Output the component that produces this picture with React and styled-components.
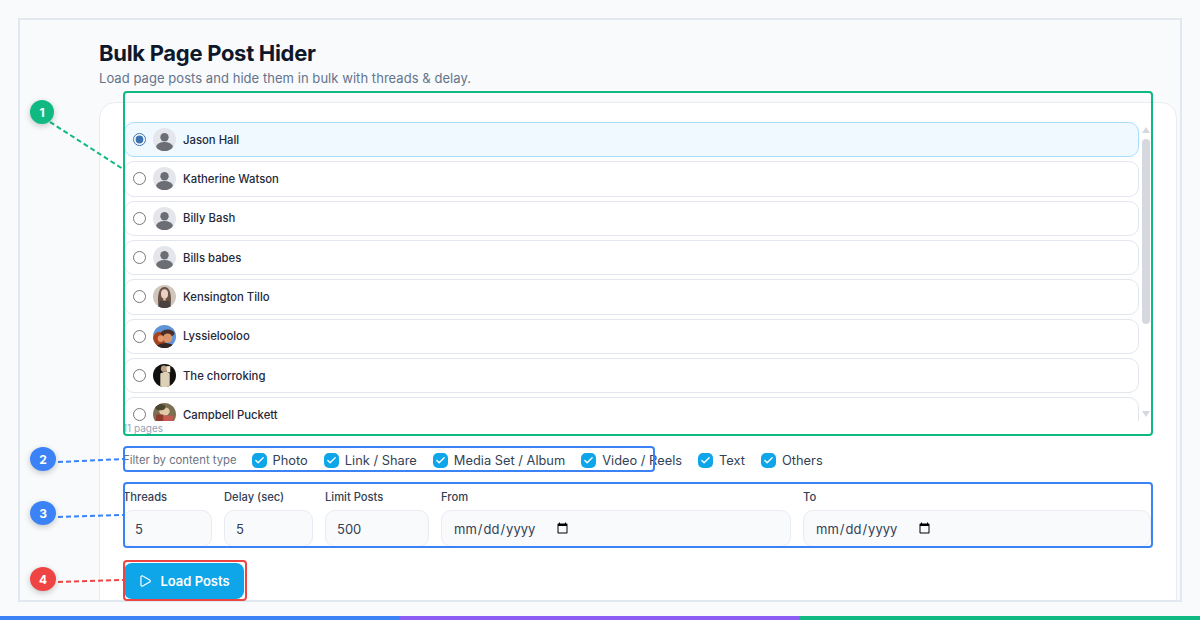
import React, { useState } from "react";
import styled, { createGlobalStyle } from "styled-components";
import { Play, Check } from "lucide-react";

const pages = [
  { name: "Jason Hall", avatar: "blank" },
  { name: "Katherine Watson", avatar: "blank" },
  { name: "Billy Bash", avatar: "blank" },
  { name: "Bills babes", avatar: "blank" },
  { name: "Kensington Tillo", avatar: "kensington" },
  { name: "Lyssielooloo", avatar: "lyssie" },
  { name: "The chorroking", avatar: "chorro" },
  { name: "Campbell Puckett", avatar: "campbell" },
  { name: "Marla Dean", avatar: "blank" },
  { name: "Northside Deals", avatar: "blank" },
  { name: "Owen Pratt", avatar: "blank" },
];

const types = ["Photo", "Link / Share", "Media Set / Album", "Video / Reels", "Text", "Others"];

const Avatar = ({ kind }) => {
  if (kind === "kensington") {
    return (
      <AvatarSvg viewBox="0 0 22 22">
        <rect width="22" height="22" fill="#cfc6bd" />
        <path d="M5 19 C4 9 6 2 11 2 C16 2 18 9 17 19 Z" fill="#6a5245" />
        <ellipse cx="11" cy="8.5" rx="3.4" ry="4.4" fill="#ecd2c2" />
        <rect x="9.8" y="12" width="2.4" height="3" fill="#e0bfac" />
        <path d="M7 15 L15 15 L18 22 L4 22 Z" fill="#4a4240" />
      </AvatarSvg>
    );
  }
  if (kind === "lyssie") {
    return (
      <AvatarSvg viewBox="0 0 22 22">
        <rect width="22" height="22" fill="#5f95d6" />
        <ellipse cx="6" cy="14" rx="6" ry="7.5" fill="#a8431f" />
        <ellipse cx="14" cy="8" rx="6.5" ry="3.6" fill="#4a3028" />
        <ellipse cx="14" cy="12.5" rx="4.4" ry="4.4" fill="#dd9468" />
        <ellipse cx="7.5" cy="13" rx="3" ry="3.2" fill="#e49a70" />
        <path d="M3 20 Q11 15 19 19 L19 22 L3 22 Z" fill="#33261f" />
      </AvatarSvg>
    );
  }
  if (kind === "chorro") {
    return (
      <AvatarSvg viewBox="0 0 22 22">
        <rect width="22" height="22" fill="#12100e" />
        <path d="M7 9 L12 7 L16 9 L16 22 L7 22 Z" fill="#ddd0b6" />
        <ellipse cx="10.5" cy="4.5" rx="3" ry="3" fill="#bfa184" />
        <rect x="13" y="2" width="3.5" height="6" fill="#efe8d8" />
      </AvatarSvg>
    );
  }
  if (kind === "campbell") {
    return (
      <AvatarSvg viewBox="0 0 22 22">
        <rect width="22" height="22" fill="#7c7052" />
        <ellipse cx="11" cy="8" rx="5" ry="4" fill="#e3c9a8" />
        <rect x="3" y="11" width="7" height="11" fill="#8f3a2e" />
        <rect x="10" y="12" width="9" height="10" fill="#c55a52" />
        <ellipse cx="7" cy="4" rx="5" ry="3" fill="#4c4630" />
      </AvatarSvg>
    );
  }
  return (
    <AvatarSvg viewBox="0 0 22 22">
      <rect width="22" height="22" fill="#e4e6eb" />
      <circle cx="11" cy="8.8" r="4" fill="#6b6e74" />
      <ellipse cx="11" cy="18" rx="8" ry="4.6" fill="#6b6e74" />
    </AvatarSvg>
  );
};

export default function App() {
  const [selected, setSelected] = useState("Jason Hall");
  const [checked, setChecked] = useState(types);

  const toggleType = (type) => {
    setChecked((prev) => (prev.includes(type) ? prev.filter((t) => t !== type) : [...prev, type]));
  };

  return (
    <Page>
      <GlobalStyle />
      <Frame>
        <Title>Bulk Page Post Hider</Title>
        <Subtitle>Load page posts and hide them in bulk with threads &amp; delay.</Subtitle>
        <Card>
          <ListWrap>
            <PageList>
              {pages.map((page) => (
                <PageRow key={page.name} $active={selected === page.name}>
                  <Radio
                    type="radio"
                    name="page"
                    checked={selected === page.name}
                    onChange={() => setSelected(page.name)}
                  />
                  <Avatar kind={page.avatar} />
                  <PageName>{page.name}</PageName>
                </PageRow>
              ))}
            </PageList>
            <ScrollRail>
              <ScrollArrow />
              <ScrollThumb />
              <ScrollArrow $down />
            </ScrollRail>
          </ListWrap>
          <PageCount>11 pages</PageCount>

          <FilterRow>
            <FilterLabel>Filter by content type</FilterLabel>
            {types.map((type) => (
              <TypeOption key={type} onClick={() => toggleType(type)}>
                <CheckBox $on={checked.includes(type)}>
                  {checked.includes(type) && <Check size={11} strokeWidth={3} color="#fff" />}
                </CheckBox>
                {type}
              </TypeOption>
            ))}
          </FilterRow>

          <FieldGrid>
            <Field>
              <FieldLabel>Threads</FieldLabel>
              <Input type="text" defaultValue="5" />
            </Field>
            <Field>
              <FieldLabel>Delay (sec)</FieldLabel>
              <Input type="text" defaultValue="5" />
            </Field>
            <Field>
              <FieldLabel>Limit Posts</FieldLabel>
              <Input type="text" defaultValue="500" />
            </Field>
            <Field>
              <FieldLabel>From</FieldLabel>
              <Input type="date" />
            </Field>
            <Field>
              <FieldLabel>To</FieldLabel>
              <Input type="date" />
            </Field>
          </FieldGrid>

          <LoadButton>
            <Play size={14} strokeWidth={2} />
            Load Posts
          </LoadButton>
        </Card>
      </Frame>

      <Strip>
        <StripPart $color="#3b82f6" />
        <StripPart $color="#8b5cf6" />
        <StripPart $color="#10b981" />
      </Strip>

      {/* callouts drawn over the screenshot */}
      <Lines viewBox="0 0 1200 620">
        <line x1="50" y1="122" x2="123" y2="169" stroke="#10b981" />
        <line x1="58" y1="462" x2="123" y2="459" stroke="#3b82f6" />
        <line x1="58" y1="517" x2="123" y2="515" stroke="#3b82f6" />
        <line x1="58" y1="582" x2="123" y2="580" stroke="#ef4444" />
      </Lines>
      <Outline $x={123} $y={91} $w={1030} $h={345} $color="#10b981" />
      <Outline $x={123} $y={446} $w={532} $h={26} $color="#3b82f6" />
      <Outline $x={123} $y={482} $w={1030} $h={66} $color="#3b82f6" />
      <Outline $x={123} $y={560} $w={124} $h={41} $color="#ef4444" />
      <Badge $x={30} $y={100} $w={24} $color="#10b981">1</Badge>
      <Badge $x={30} $y={447} $w={26} $color="#3b82f6">2</Badge>
      <Badge $x={30} $y={501} $w={26} $color="#3b82f6">3</Badge>
      <Badge $x={30} $y={567} $w={26} $color="#ef4444">4</Badge>
    </Page>
  );
}

const GlobalStyle = createGlobalStyle`
  html, body {
    margin: 0;
    height: 620px;
    overflow: hidden;
    background: #f8fafc;
    font-family: Inter, "Noto Sans", sans-serif;
  }
  * {
    box-sizing: border-box;
  }
`;

const Page = styled.div`
  position: relative;
  width: 1200px;
  height: 620px;
  padding-top: 18px;
`;

const Frame = styled.div`
  height: 584px;
  margin: 0 18px;
  padding: 19px 3px 0 79px;
  border: 2px solid #e2e8f0;
  overflow: hidden;
`;

const Title = styled.h1`
  margin: 0;
  font-size: 22px;
  line-height: 29px;
  font-weight: 700;
  letter-spacing: -0.3px;
  color: #0f172a;
`;

const Subtitle = styled.p`
  margin: 1px 0 0;
  font-size: 13px;
  line-height: 18px;
  letter-spacing: 0.05px;
  color: #64748b;
`;

const Card = styled.div`
  margin-top: 15px;
  height: 600px;
  padding: 19px 24px 0;
  background: #fff;
  border: 1px solid #e8ecf2;
  border-radius: 16px;
`;

const ListWrap = styled.div`
  display: flex;
  gap: 3px;
  width: 1026px;
  height: 299px;
`;

const PageList = styled.div`
  display: flex;
  flex-direction: column;
  gap: 4px;
  width: 1015px;
  overflow-y: auto;
  scrollbar-width: none;
`;

const ScrollRail = styled.div`
  display: flex;
  flex-direction: column;
  width: 8px;
  padding: 5px 0 4px;
`;

const ScrollArrow = styled.div`
  flex: none;
  height: 6px;
  margin-top: ${(p) => (p.$down ? "auto" : "0")};
  background: #d5d8df;
  clip-path: ${(p) =>
    p.$down ? "polygon(0 0, 100% 0, 50% 100%)" : "polygon(50% 0, 100% 100%, 0 100%)"};
`;

const ScrollThumb = styled.div`
  flex: none;
  height: 185px;
  margin-top: 6px;
  background: #d5d8df;
  border-radius: 4px;
`;

const PageRow = styled.label`
  display: flex;
  flex: none;
  align-items: center;
  height: 35.33px;
  padding-left: 8px;
  background: ${(p) => (p.$active ? "#f0f9ff" : "#fff")};
  border: 1px solid ${(p) => (p.$active ? "#a9defb" : "#e2e6ee")};
  border-radius: 10px;
`;

const Radio = styled.input`
  width: 13px;
  height: 13px;
  margin: 0 7px 0 0;
  accent-color: #3b73b0;
`;

const AvatarSvg = styled.svg`
  flex: none;
  width: 23px;
  height: 23px;
  border-radius: 50%;
`;

const PageName = styled.span`
  margin-left: 7px;
  font-size: 11.3px;
  font-weight: 500;
  color: #1e293b;
`;

const PageCount = styled.div`
  margin-left: -1px;
  font-size: 10px;
  line-height: 14px;
  color: #94a3b8;
`;

const FilterRow = styled.div`
  display: flex;
  align-items: center;
  gap: 16px;
  height: 18px;
  margin-top: 16px;
`;

const FilterLabel = styled.span`
  margin: 0 -1px;
  font-size: 11.3px;
  color: #6b7280;
`;

const TypeOption = styled.span`
  display: flex;
  align-items: center;
  gap: 6px;
  font-size: 12.85px;
  color: #334155;
  cursor: pointer;
`;

const CheckBox = styled.span`
  display: flex;
  align-items: center;
  justify-content: center;
  width: 15px;
  height: 15px;
  border-radius: 5px;
  background: ${(p) => (p.$on ? "#0ea5e9" : "#fff")};
`;

const FieldGrid = styled.div`
  display: grid;
  grid-template-columns: 89px 89px 104px 350px 1fr;
  gap: 12px;
  width: 1028px;
  margin: 21px 0 0 -1px;
`;

const Field = styled.div`
  display: flex;
  flex-direction: column;
  gap: 5px;
`;

const FieldLabel = styled.label`
  font-size: 11.2px;
  line-height: 15px;
  font-weight: 500;
  color: #334155;
`;

const Input = styled.input`
  width: 100%;
  height: 37px;
  padding: 0 11px;
  font-family: inherit;
  font-size: 13px;
  color: #334155;
  background: #f8fafc;
  border: 1px solid #e8ebf1;
  border-radius: 10px;
  outline: none;

  &::-webkit-datetime-edit {
    flex: none;
  }
  &::-webkit-calendar-picker-indicator {
    margin: 0;
  }
`;

const LoadButton = styled.button`
  display: flex;
  align-items: center;
  justify-content: center;
  gap: 8px;
  width: 120px;
  height: 36px;
  margin-top: 16px;
  font-family: inherit;
  font-size: 13px;
  font-weight: 600;
  color: #fff;
  background: #0ea5e9;
  border: none;
  border-radius: 8px;
  cursor: pointer;
`;

const Strip = styled.div`
  display: flex;
  height: 4px;
  margin-top: 14px;
`;

const StripPart = styled.div`
  flex: 1;
  background: ${(p) => p.$color};
`;

const Lines = styled.svg`
  position: absolute;
  inset: 0;
  width: 1200px;
  height: 620px;
  pointer-events: none;
  stroke-width: 2;
  stroke-dasharray: 5 3;
`;

const Outline = styled.div`
  position: absolute;
  left: ${(p) => p.$x}px;
  top: ${(p) => p.$y}px;
  width: ${(p) => p.$w}px;
  height: ${(p) => p.$h}px;
  border: 2px solid ${(p) => p.$color};
  border-radius: 4px;
  pointer-events: none;
`;

const Badge = styled.div`
  position: absolute;
  left: ${(p) => p.$x}px;
  top: ${(p) => p.$y}px;
  display: flex;
  align-items: center;
  justify-content: center;
  width: ${(p) => p.$w}px;
  height: 24px;
  font-size: 12px;
  font-weight: 700;
  color: #fff;
  background: ${(p) => p.$color};
  border-radius: 50%;
  box-shadow: 0 2px 6px rgba(0, 0, 0, 0.22);
`;
